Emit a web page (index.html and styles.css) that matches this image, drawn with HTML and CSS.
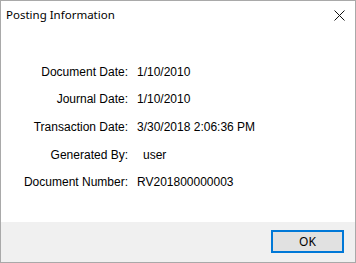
FILE: index.html
```html
<!DOCTYPE html>
<html>
<head>
<meta charset="utf-8">
<link rel="stylesheet" href="styles.css">
</head>
<body>
<div class="window">
  <div class="titlebar">
    <span class="title">Posting Information</span>
    <svg class="close" width="11" height="11" viewBox="0 0 11 11"><path d="M0.5 0.5L10.5 10.5M10.5 0.5L0.5 10.5" stroke="#111" stroke-width="1" fill="none"/></svg>
  </div>
  <div class="content">
    <div class="grid">
      <div class="label">Document Date:</div><div class="value">1/10/2010</div>
      <div class="label">Journal Date:</div><div class="value">1/10/2010</div>
      <div class="label">Transaction Date:</div><div class="value">3/30/2018 2:06:36 PM</div>
      <div class="label">Generated By:</div><div class="value indent">user</div>
      <div class="label">Document Number:</div><div class="value">RV201800000003</div>
    </div>
  </div>
  <div class="footer">
    <button class="ok">OK</button>
  </div>
</div>
</body>
</html>
```
FILE: styles.css
```css
html, body {
  margin: 0;
  padding: 0;
  background: #ffffff;
}
.window {
  width: 356px;
  height: 263px;
  box-sizing: border-box;
  border: 1px solid #a9a9a9;
  display: flex;
  flex-direction: column;
  background: #ffffff;
}
.titlebar {
  height: 29px;
  display: flex;
  align-items: center;
  justify-content: space-between;
  padding: 0 10px 0 5px;
}
.title {
  font-family: "Noto Sans", "Open Sans", sans-serif;
  font-size: 11.5px;
  color: #000;
  margin-top: -2px;
}
.close {
  display: block;
  margin-top: -1px;
}
.content {
  flex: 1;
  padding-top: 28px;
}
.grid {
  display: grid;
  grid-template-columns: 127px auto;
  grid-auto-rows: 27.6px;
  align-items: center;
  font-family: "Liberation Sans", Arial, sans-serif;
  font-size: 12px;
  color: #000;
}
.label {
  text-align: right;
}
.value {
  padding-left: 9px;
}
.value.indent {
  padding-left: 15px;
}
.footer {
  height: 40px;
  background: #f0f0f0;
  display: flex;
  justify-content: flex-end;
  align-items: flex-start;
  padding: 8px 11px 0 0;
  box-sizing: border-box;
}
.ok {
  width: 73px;
  height: 23px;
  box-sizing: border-box;
  border: 2px solid #0078d7;
  background: #e1e1e1;
  font-family: "Noto Sans", "Open Sans", sans-serif;
  font-size: 12px;
  color: #000;
  padding: 0;
  margin: 0;
}
```
